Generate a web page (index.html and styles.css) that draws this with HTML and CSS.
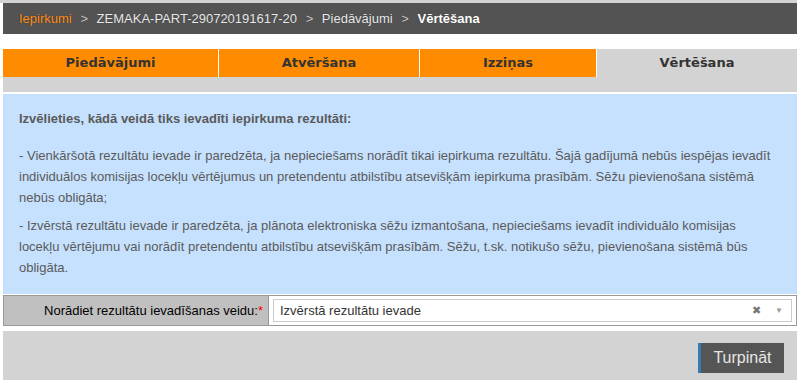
FILE: index.html
```html
<!doctype html>
<html>
<head>
    <title>Vērtēšana</title>
    <meta charset="utf-8">
    <link rel="stylesheet" href="styles.css">
</head>
<body>
    <div class="topline"></div>
    <div class="page">
        <div class="crumbs">
            <a href="#" class="crumb-home">Iepirkumi</a>
            <span class="sep">&gt;</span>
            <span>ZEMAKA-PART-290720191617-20</span>
            <span class="sep">&gt;</span>
            <span>Piedāvājumi</span>
            <span class="sep">&gt;</span>
            <b class="crumb-current">Vērtēšana</b>
        </div>

        <div class="tabs">
            <div class="tab">Piedāvājumi</div>
            <div class="tab">Atvēršana</div>
            <div class="tab">Izziņas</div>
            <div class="tab active">Vērtēšana</div>
        </div>
        <div class="tab-strip"></div>

        <div class="info">
            <p class="info-title">Izvēlieties, kādā veidā tiks ievadīti iepirkuma rezultāti:</p>
            <p>- Vienkāršotā rezultātu ievade ir paredzēta, ja nepieciešams norādīt tikai iepirkuma rezultātu. Šajā gadījumā nebūs iespējas ievadīt individuālos komisijas locekļu vērtējumus un pretendentu atbilstību atsevišķām iepirkuma prasībām. Sēžu pievienošana sistēmā nebūs obligāta;</p>
            <p class="info-second">- Izvērstā rezultātu ievade ir paredzēta, ja plānota elektroniska sēžu izmantošana, nepieciešams ievadīt individuālo komisijas locekļu vērtējumu vai norādīt pretendentu atbilstību atsevišķām prasībām. Sēžu, t.sk. notikušo sēžu, pievienošana sistēmā būs obligāta.</p>
        </div>

        <div class="form-row">
            <label class="form-label">Norādiet rezultātu ievadīšanas veidu:<span class="req">*</span></label>
            <div class="form-field">
                <div class="select">
                    <span class="select-value">Izvērstā rezultātu ievade</span>
                    <span class="select-clear">&#10006;</span>
                    <span class="select-arrow">&#9660;</span>
                </div>
            </div>
        </div>

        <div class="actions">
            <button class="btn-next">Turpināt</button>
        </div>
    </div>
</body>
</html>
```

FILE: styles.css
```css
* {
    margin: 0;
    padding: 0;
    box-sizing: border-box;
}

body {
    font-family: "Liberation Sans", Arial, sans-serif;
    font-size: 13px;
    background: #ffffff;
    color: #333333;
}

.topline {
    height: 3px;
    background: #d3d3d3;
}

.page {
    padding-left: 3px;
}

.crumbs {
    height: 31px;
    line-height: 31px;
    background: #535353;
    color: #e8e8e8;
    padding-left: 16px;
    white-space: nowrap;
    text-shadow: 0 0 1px rgba(0, 0, 0, 0.4);
}

.crumbs .sep {
    color: #c8c8c8;
    margin: 0 5px;
}

.crumb-home {
    color: #ff8c1a;
    text-decoration: none;
}

.crumb-current {
    color: #ffffff;
}

.tabs {
    margin-top: 15px;
    display: grid;
    grid-template-columns: 215px 200px 176px 1fr;
    gap: 1px;
}

.tab {
    height: 28px;
    line-height: 28px;
    text-align: center;
    background: #ff8c00;
    color: #333333;
    font-family: "DejaVu Sans", Verdana, sans-serif;
    font-weight: bold;
    font-size: 13px;
}

.tab.active {
    background: #d3d3d3;
}

.tab-strip {
    height: 15px;
    background: #d3d3d3;
    margin-bottom: 2px;
}

.info {
    background: #c6e1fe;
    color: #5a5a5a;
    padding: 14px 22px 16px 16px;
    line-height: 21px;
}

.info p {
    margin-top: 16px;
}

.info .info-title {
    margin-top: 0;
    font-weight: bold;
}

.info .info-second {
    margin-top: 7px;
}

.form-row {
    margin-top: 1px;
    display: flex;
    border: 1px solid #999999;
    height: 31px;
}

.form-label {
    width: 265px;
    background: #c0c0c0;
    color: #000000;
    text-align: right;
    line-height: 29px;
    padding-right: 5px;
    border-right: 1px solid #999999;
}

.req {
    color: #ff0000;
}

.form-field {
    flex: 1;
    padding: 3px 4px 3px 4px;
    background: #ffffff;
}

.select {
    display: flex;
    align-items: center;
    height: 23px;
    border: 1px solid #cccccc;
    padding: 0 8px 0 6px;
    color: #333333;
}

.select-value {
    flex: 1;
}

.select-clear {
    color: #777777;
    font-size: 11px;
    margin-right: 14px;
}

.select-arrow {
    color: #999999;
    font-size: 8px;
}

.actions {
    margin-top: 5px;
    background: #d3d3d3;
    height: 60px;
    padding: 12px 13px 0 0;
    display: flex;
    justify-content: flex-end;
    align-items: flex-start;
}

.btn-next {
    height: 30px;
    width: 86px;
    border: none;
    border-left: 3px solid #337ab7;
    background: #555555;
    color: #e6e6e6;
    font-family: "Liberation Sans", Arial, sans-serif;
    font-size: 16px;
    cursor: pointer;
}
```
